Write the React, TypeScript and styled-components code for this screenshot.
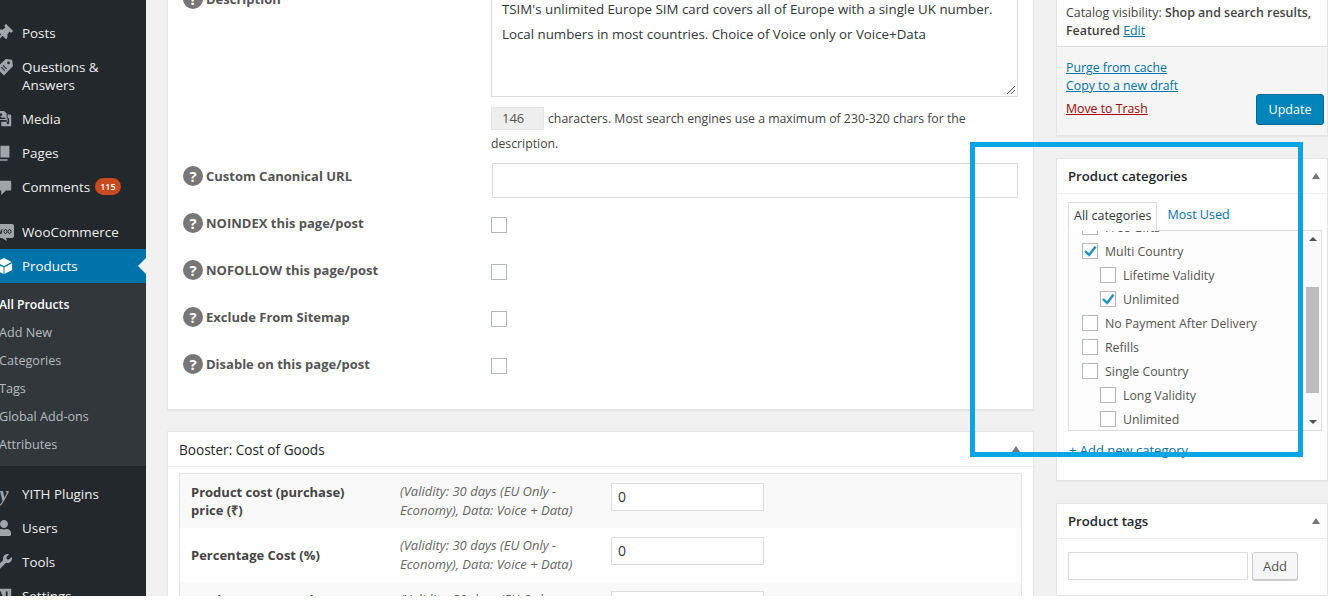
import React from "react";
import styled, { createGlobalStyle } from "styled-components";
import { FaThumbtack, FaUser, FaWrench } from "react-icons/fa";

const GlobalStyle = createGlobalStyle`
  html, body { margin: 0; padding: 0; background: #fff; }
  body { font-family: "Open Sans", "Liberation Sans", sans-serif; font-size: 13px; color: #444; }
`;

const Frame = styled.div`
  position: relative;
  display: flex;
  width: 1328px;
  height: 596px;
  overflow: hidden;
  background: #f1f1f1;
`;

/* admin menu */
const Sidebar = styled.nav`
  flex: 0 0 146px;
  height: 596px;
  overflow: hidden;
  padding-top: 16px;
  box-sizing: border-box;
  background: #23282d;
  color: #eee;
`;

const MenuRow = styled.div<{ $current?: boolean; $gap?: number }>`
  position: relative;
  display: flex;
  align-items: flex-start;
  padding: 8px 0 8px 22px;
  margin-top: ${(p) => p.$gap || 0}px;
  font-size: 13.4px;
  line-height: 18px;
  background: ${(p) => (p.$current ? "#0073aa" : "transparent")};
  color: ${(p) => (p.$current ? "#fff" : "#eee")};
`;

const MenuIcon = styled.span<{ $current?: boolean }>`
  position: absolute;
  left: -6px;
  top: 8px;
  width: 20px;
  height: 18px;
  display: flex;
  align-items: center;
  justify-content: center;
  color: ${(p) => (p.$current ? "#fff" : "#a0a5aa")};
  font-size: 16px;
`;

const Bubble = styled.span`
  display: inline-block;
  margin: 0 0 0 5px;
  padding: 0 5px;
  height: 17px;
  line-height: 17px;
  border-radius: 9px;
  background: #ca4a1f;
  color: #fff;
  font-size: 9px;
  font-weight: 600;
`;

const CurrentArrow = styled.span`
  position: absolute;
  right: 0;
  top: 9px;
  width: 0;
  height: 0;
  border: 8px solid transparent;
  border-left: 0;
  border-right-color: #f1f1f1;
`;

const SubMenu = styled.div`
  background: #32373c;
  padding: 8px 0 7px;
  margin-bottom: 11px;
`;

const SubRow = styled.div<{ $active?: boolean }>`
  height: 28px;
  line-height: 28px;
  margin-left: -1px;
  white-space: nowrap;
  font-size: ${(p) => (p.$active ? 12.2 : 12.6)}px;
  color: ${(p) => (p.$active ? "#fff" : "rgba(240,245,250,0.7)")};
  font-weight: ${(p) => (p.$active ? 600 : 400)};
`;

/* main + side columns */
const Columns = styled.div`
  display: flex;
  gap: 22px;
  margin-left: 21px;
  flex: 1;
  min-width: 0;
`;

const MainColumn = styled.div`
  flex: 0 0 867px;
  display: flex;
  flex-direction: column;
  gap: 21px;
`;

const SideColumn = styled.div`
  flex: 1;
  min-width: 0;
  display: flex;
  flex-direction: column;
  gap: 22px;
`;

const Box = styled.section`
  flex: none;
  background: #fff;
  box-shadow: 0 1px 1px rgba(0, 0, 0, 0.04);
  border: 1px solid #e5e5e5;
`;

const SeoBox = styled(Box)`
  height: 410px;
  box-sizing: border-box;
  border-top: 0;
  padding: 0 15px;
`;

const SeoRow = styled.div<{ $height: number }>`
  display: grid;
  grid-template-columns: 308px 1fr;
  align-items: start;
  height: ${(p) => p.$height}px;
`;

const SeoLabel = styled.div<{ $top: number }>`
  display: flex;
  align-items: center;
  gap: 3px;
  height: 22px;
  margin-top: ${(p) => p.$top}px;
  font-weight: 700;
  font-size: 13px;
  color: #555;
  white-space: nowrap;
`;

const HelpDot = styled.span`
  flex: 0 0 20px;
  width: 20px;
  height: 20px;
  border-radius: 50%;
  background: #777;
  color: #fff;
  font-size: 15px;
  font-weight: 700;
  line-height: 20px;
  text-align: center;
`;

const TextArea = styled.div`
  box-sizing: border-box;
  position: relative;
  width: 527px;
  height: 108px;
  margin-top: -11px;
  padding: 7px 10px;
  border: 1px solid #ddd;
  line-height: 25px;
  font-size: 13.3px;
  white-space: nowrap;
  color: #32373c;
`;

const Grip = styled.svg`
  position: absolute;
  right: 1px;
  bottom: 1px;
`;

const CountLine = styled.div`
  width: 527px;
  margin-top: 9px;
  line-height: 25px;
  font-size: 12.25px;
  color: #444;
`;

const CountBox = styled.span`
  display: inline-block;
  box-sizing: border-box;
  width: 53px;
  height: 23px;
  line-height: 21px;
  padding-left: 10px;
  margin-right: 4px;
  background: #eee;
  border: 1px solid #e5e5e5;
  font-size: 13px;
  color: #555;
`;

const UrlInput = styled.div`
  box-sizing: border-box;
  width: 526px;
  height: 35px;
  margin-left: 1px;
  border: 1px solid #ddd;
  background: #fff;
`;

const Check = styled.span`
  box-sizing: border-box;
  flex: 0 0 16px;
  width: 16px;
  height: 16px;
  display: inline-flex;
  align-items: center;
  justify-content: center;
  border: 1px solid #b4b9be;
  background: #fff;
`;

const SeoCheck = styled(Check)`
  margin-top: 7px;
`;

const BoxHeader = styled.h2`
  box-sizing: border-box;
  margin: 0;
  display: flex;
  align-items: center;
  justify-content: space-between;
  height: 35px;
  padding: 0 7px 0 11px;
  border-bottom: 1px solid #eee;
  font-size: 13.2px;
  font-weight: 600;
  color: #23282d;
`;

const PlainHeader = styled(BoxHeader)`
  padding-right: 13px;
  font-size: 13.6px;
  font-weight: 400;
`;

const ToggleArrow = styled.span`
  width: 0;
  height: 0;
  border: 4.5px solid transparent;
  border-top: 0;
  border-bottom: 6px solid #72777c;
`;

const CostTable = styled.div`
  margin: 6px 11px 0;
  border: 1px solid #e5e5e5;
`;

const CostRow = styled.div<{ $striped?: boolean }>`
  display: grid;
  grid-template-columns: 209px 211px 153px;
  height: 54px;
  padding-left: 11px;
  align-items: center;
  background: ${(p) => (p.$striped ? "#f9f9f9" : "#fff")};
`;

const CostLabel = styled.div`
  padding-right: 20px;
  font-weight: 700;
  font-size: 13px;
  line-height: 18px;
  color: #444;
`;

const CostHint = styled.div`
  padding-right: 30px;
  font-style: italic;
  font-size: 13px;
  line-height: 19px;
  color: #666;
`;

const CostInput = styled.div`
  box-sizing: border-box;
  height: 28px;
  padding-left: 6px;
  line-height: 26px;
  border: 1px solid #ddd;
  background: #fff;
  font-size: 14px;
  color: #32373c;
  align-self: start;
  margin-top: 9px;
`;

const PublishBox = styled(Box)`
  height: 136px;
  box-sizing: border-box;
  border-top: 0;
`;

const PublishBody = styled.div`
  margin-top: 4px;
  height: 42px;
  padding-left: 9px;
  line-height: 18px;
  font-size: 12.4px;
  white-space: nowrap;
  color: #444;
`;

const Strong = styled.b`
  font-weight: 600;
`;

const PublishFoot = styled.div`
  display: flex;
  justify-content: space-between;
  height: 89px;
  box-sizing: border-box;
  padding: 12px 3px 0 9px;
  border-top: 1px solid #ddd;
  background: #f5f5f5;
`;

const LinkStack = styled.div`
  display: flex;
  flex-direction: column;
  line-height: 18px;
  font-size: 12.3px;
`;

const Anchor = styled.a<{ $danger?: boolean; $gap?: number }>`
  color: ${(p) => (p.$danger ? "#a00" : "#0073aa")};
  text-decoration: underline;
  margin-top: ${(p) => p.$gap || 0}px;
`;

const UpdateButton = styled.button`
  align-self: flex-start;
  margin-top: 35px;
  width: 68px;
  height: 31px;
  padding: 0;
  border: 1px solid #006799;
  border-radius: 3px;
  background: #0085ba;
  color: #fff;
  font: 12.5px "Open Sans", sans-serif;
`;

const CategoryBody = styled.div`
  height: 286px;
  box-sizing: border-box;
  padding: 8px 11px 0 11px;
`;

const Tabs = styled.div`
  display: flex;
  align-items: flex-start;
  height: 28px;
  gap: 10px;
`;

const ActiveTab = styled.span`
  box-sizing: border-box;
  height: 29px;
  line-height: 26px;
  padding: 0 5px;
  border: 1px solid #ddd;
  border-bottom-color: #fdfdfd;
  position: relative;
  z-index: 1;
  color: #32373c;
  font-size: 12.5px;
  white-space: nowrap;
`;

const IdleTab = styled.span`
  color: #0073aa;
  font-size: 12.5px;
  line-height: 26px;
`;

const CategoryList = styled.div`
  position: relative;
  box-sizing: border-box;
  width: 254px;
  height: 201px;
  overflow: hidden;
  border: 1px solid #ddd;
  background: #fdfdfd;
`;

const CategoryInner = styled.div`
  margin-top: -16px;
`;

const CategoryRow = styled.div<{ $child?: boolean }>`
  display: flex;
  align-items: center;
  gap: 7px;
  height: 24px;
  padding-left: ${(p) => (p.$child ? 31 : 13)}px;
  font-size: 12.35px;
  color: #555;
  white-space: nowrap;
`;

const Scrollbar = styled.div`
  position: absolute;
  top: 0;
  right: 0;
  bottom: 0;
  width: 16px;
  background: #fafafa;
  display: flex;
  flex-direction: column;
  align-items: center;
  justify-content: space-between;
  padding: 6px 0;
  box-sizing: border-box;
`;

const ScrollThumb = styled.div`
  position: absolute;
  top: 56px;
  left: 1px;
  width: 13px;
  height: 106px;
  background: #bcbcbc;
`;

const ScrollArrow = styled.span<{ $down?: boolean }>`
  width: 0;
  height: 0;
  border: 4px solid transparent;
  ${(p) => (p.$down ? "border-bottom: 0; border-top: 4px solid #505050;" : "border-top: 0; border-bottom: 4px solid #505050;")}
`;

const AddCategory = styled.a`
  display: block;
  margin: 10px 0 0 1px;
  color: #0073aa;
  text-decoration: underline;
  font-size: 13px;
  line-height: 18px;
`;

const TagBox = styled(Box)`
  flex: 1;
`;

const TagRow = styled.div`
  display: flex;
  gap: 4px;
  padding: 13px 11px 0;
`;

const TagInput = styled.div`
  box-sizing: border-box;
  width: 180px;
  height: 28px;
  border: 1px solid #ddd;
  background: #fff;
`;

const AddButton = styled.button`
  box-sizing: border-box;
  width: 46px;
  height: 28px;
  padding: 0;
  border: 1px solid #ccc;
  border-radius: 3px;
  background: #f7f7f7;
  box-shadow: 0 1px 0 #ccc;
  color: #555;
  font: 13px "Open Sans", sans-serif;
`;

/* callout drawn over the screenshot */
const Callout = styled.div`
  position: absolute;
  left: 970px;
  top: 142px;
  width: 333px;
  height: 315px;
  box-sizing: border-box;
  border: 5px solid #0aa5e4;
  pointer-events: none;
`;

const YithMark = styled.span`
  font-family: "Liberation Serif", serif;
  font-style: italic;
  font-weight: 700;
  font-size: 20px;
  line-height: 14px;
  color: #a0a5aa;
`;

const PinIcon = styled(FaThumbtack)`
  transform: rotate(45deg);
`;

const PagesIcon = () => (
  <svg width="18" height="18" viewBox="0 0 20 20" fill="currentColor">
    <path d="M6 15V2h10v13H6zM4 4v13h10v1.500H2.500V4H4z" />
  </svg>
);

const MediaIcon = () => (
  <svg width="18" height="18" viewBox="0 0 20 20" fill="currentColor">
    <path d="M13 11V4l-3-3H2v10h11zM5 5a1.500 1.500 0 1 1 0 .1V5zM3 10l3-3 2 2 2-1 2 2H3zM14 5h3l1 1v12H7v-5h7V5zm-1 9.500a1.300 1.300 0 1 0 2.600 0V9l-2.600.6v4.900z" />
  </svg>
);

const QuestionsIcon = () => (
  <svg width="18" height="18" viewBox="0 0 20 20" fill="currentColor">
    <path d="M12 1l7 1 1 7-10 10.500L1.500 11 12 1zm3 3a1.500 1.500 0 1 0 0 3 1.500 1.500 0 0 0 0-3zM6.500 10.500l4 4 .8-.8-4-4-.8.8zm2-2l4 4 .8-.8-4-4-.8.8z" fillRule="evenodd" />
  </svg>
);

const CommentIcon = () => (
  <svg width="18" height="18" viewBox="0 0 20 20" fill="currentColor">
    <path d="M3 3h14a1 1 0 0 1 1 1v9a1 1 0 0 1-1 1h-5l-5 5v-5H3a1 1 0 0 1-1-1V4a1 1 0 0 1 1-1z" />
  </svg>
);

const WooIcon = () => (
  <svg width="20" height="18" viewBox="0 0 20 18">
    <rect x="0" y="1" width="20" height="14" rx="2" fill="currentColor" />
    <path d="M8 15l5 3-1-3z" fill="currentColor" />
    <path d="M3 6l1 5 1.500-4 1.500 4 1-5M10 8.500a1.500 2 0 1 0 3 0 1.500 2 0 1 0-3 0M14 8.500a1.500 2 0 1 0 3 0 1.500 2 0 1 0-3 0" fill="none" stroke="#23282d" strokeWidth="1" />
  </svg>
);

const BoxIcon = () => (
  <svg width="18" height="18" viewBox="0 0 20 20" fill="currentColor">
    <path d="M10 1l8.500 4.500-8.500 4.500L1.500 5.500 10 1zM1 7l8.500 4.500V19L1 14.500V7zm18 0v7.500L10.500 19v-7.500L19 7z" />
  </svg>
);

const SettingsIcon = () => (
  <svg width="18" height="18" viewBox="0 0 20 20" fill="currentColor">
    <path d="M2 2h16v16H2V2zm3 3v3H4v2h1v5h2v-5h1V8H7V5H5zm7 0v5h-1v2h1v3h2v-3h1v-2h-1V5h-2z" fillRule="evenodd" />
  </svg>
);

const CheckMark = () => (
  <svg width="14" height="14" viewBox="0 0 14 14" fill="#1e8cbe" stroke="#1e8cbe" strokeWidth="0.6">
    <path d="M11.600 2.300l1.500 1.100L6.300 12.300 1.500 8l1.200-1.400 3.300 3z" />
  </svg>
);

const subItems = ["All Products", "Add New", "Categories", "Tags", "Global Add-ons", "Attributes"];

const seoChecks = [
  "NOINDEX this page/post",
  "NOFOLLOW this page/post",
  "Exclude From Sitemap",
  "Disable on this page/post",
];

const categories = [
  { name: "Free Gifts" },
  { name: "Multi Country", checked: true },
  { name: "Lifetime Validity", child: true },
  { name: "Unlimited", child: true, checked: true },
  { name: "No Payment After Delivery" },
  { name: "Refills" },
  { name: "Single Country" },
  { name: "Long Validity", child: true },
  { name: "Unlimited", child: true },
];

const hint = "(Validity: 30 days (EU Only - Economy), Data: Voice + Data)";

export default function App() {
  return (
    <>
      <GlobalStyle />
      <Frame>
        <Sidebar>
          <MenuRow><MenuIcon><PinIcon /></MenuIcon>Posts</MenuRow>
          <MenuRow><MenuIcon><QuestionsIcon /></MenuIcon>Questions &<br />Answers</MenuRow>
          <MenuRow><MenuIcon><MediaIcon /></MenuIcon>Media</MenuRow>
          <MenuRow><MenuIcon><PagesIcon /></MenuIcon>Pages</MenuRow>
          <MenuRow><MenuIcon><CommentIcon /></MenuIcon>Comments<Bubble>115</Bubble></MenuRow>
          <MenuRow $gap={11}><MenuIcon><WooIcon /></MenuIcon>WooCommerce</MenuRow>
          <MenuRow $current><MenuIcon $current><BoxIcon /></MenuIcon>Products<CurrentArrow /></MenuRow>
          <SubMenu>
            {subItems.map((item, i) => (
              <SubRow key={item} $active={i === 0}>{item}</SubRow>
            ))}
          </SubMenu>
          <MenuRow><MenuIcon><YithMark>y</YithMark></MenuIcon>YITH Plugins</MenuRow>
          <MenuRow><MenuIcon><FaUser /></MenuIcon>Users</MenuRow>
          <MenuRow><MenuIcon><FaWrench /></MenuIcon>Tools</MenuRow>
          <MenuRow><MenuIcon><SettingsIcon /></MenuIcon>Settings</MenuRow>
        </Sidebar>

        <Columns>
          <MainColumn>
            <SeoBox>
              <SeoRow $height={163}>
                <SeoLabel $top={-12}><HelpDot>?</HelpDot>Description</SeoLabel>
                <div>
                  <TextArea>
                    TSIM's unlimited Europe SIM card covers all of Europe with a single UK number.<br />
                    Local numbers in most countries. Choice of Voice only or Voice+Data
                    <Grip width="12" height="12" viewBox="0 0 12 12">
                      <path d="M11 3L3 11M11 7L7 11" stroke="#555" strokeWidth="1" />
                    </Grip>
                  </TextArea>
                  <CountLine><CountBox>146</CountBox>characters. Most search engines use a maximum of 230-320 chars for the description.</CountLine>
                </div>
              </SeoRow>
              <SeoRow $height={47}>
                <SeoLabel $top={2}><HelpDot>?</HelpDot>Custom Canonical URL</SeoLabel>
                <UrlInput />
              </SeoRow>
              {seoChecks.map((label) => (
                <SeoRow key={label} $height={47}>
                  <SeoLabel $top={2}><HelpDot>?</HelpDot>{label}</SeoLabel>
                  <SeoCheck />
                </SeoRow>
              ))}
            </SeoBox>

            <Box>
              <PlainHeader>Booster: Cost of Goods<ToggleArrow /></PlainHeader>
              <CostTable>
                <CostRow $striped>
                  <CostLabel>Product cost (purchase) price (₹)</CostLabel>
                  <CostHint>{hint}</CostHint>
                  <CostInput>0</CostInput>
                </CostRow>
                <CostRow>
                  <CostLabel>Percentage Cost (%)</CostLabel>
                  <CostHint>{hint}</CostHint>
                  <CostInput>0</CostInput>
                </CostRow>
                <CostRow $striped>
                  <CostLabel>Product cost (purchase) price</CostLabel>
                  <CostHint>{hint}</CostHint>
                  <CostInput />
                </CostRow>
              </CostTable>
            </Box>
          </MainColumn>

          <SideColumn>
            <PublishBox>
              <PublishBody>
                Catalog visibility: <Strong>Shop and search results,<br />Featured</Strong> <Anchor>Edit</Anchor>
              </PublishBody>
              <PublishFoot>
                <LinkStack>
                  <Anchor>Purge from cache</Anchor>
                  <Anchor>Copy to a new draft</Anchor>
                  <Anchor $danger $gap={5}>Move to Trash</Anchor>
                </LinkStack>
                <UpdateButton>Update</UpdateButton>
              </PublishFoot>
            </PublishBox>

            <Box>
              <BoxHeader>Product categories<ToggleArrow /></BoxHeader>
              <CategoryBody>
                <Tabs>
                  <ActiveTab>All categories</ActiveTab>
                  <IdleTab>Most Used</IdleTab>
                </Tabs>
                <CategoryList>
                  <CategoryInner>
                    {categories.map((c, i) => (
                      <CategoryRow key={i} $child={c.child}>
                        <Check>{c.checked && <CheckMark />}</Check>
                        {c.name}
                      </CategoryRow>
                    ))}
                  </CategoryInner>
                  <Scrollbar>
                    <ScrollArrow />
                    <ScrollThumb />
                    <ScrollArrow $down />
                  </Scrollbar>
                </CategoryList>
                <AddCategory>+ Add new category</AddCategory>
              </CategoryBody>
            </Box>

            <TagBox>
              <BoxHeader>Product tags<ToggleArrow /></BoxHeader>
              <TagRow>
                <TagInput />
                <AddButton>Add</AddButton>
              </TagRow>
            </TagBox>
          </SideColumn>
        </Columns>
        <Callout />
      </Frame>
    </>
  );
}
